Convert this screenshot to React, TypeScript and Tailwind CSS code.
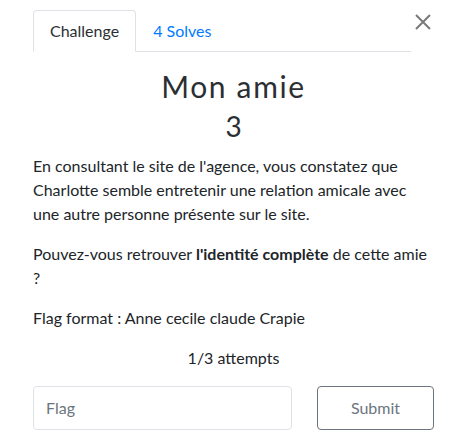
const App = () => {
  return (
    <div className="w-[457px] h-[439px] bg-white text-[#212529] font-['Lato','Liberation_Sans',sans-serif] text-base leading-6 overflow-hidden">
      <div className="flex items-start pt-[10px] pl-[33px]">
        <ul className="flex w-[378px] border-b border-[#dee2e6]">
          <li className="-mb-px px-4 py-2 border border-[#dee2e6] border-b-white rounded-t-[4px] bg-white text-[#2b2f33]">
            Challenge
          </li>
          <li className="-mb-px px-4 py-2 border border-transparent text-[#007bff]">4 Solves</li>
        </ul>
        <button className="ml-[4px] mt-[4px] w-[16px] h-[16px] text-[#7a7a7a]">
          <svg width="16" height="16" viewBox="0 0 16 16" fill="none" stroke="currentColor" strokeWidth="2">
            <path d="M1 1L15 15M15 1L1 15" />
          </svg>
        </button>
      </div>

      <div className="w-[401px] ml-[33px]">
        <h2 className="text-center text-[30px] leading-[1.2] tracking-[0.055em] mt-[16px] text-[#2b2f33]">Mon amie</h2>
        <h3 className="text-center text-[28px] leading-[1.2] mt-[6px] text-[#2b2f33]">3</h3>

        <div className="mt-[10px]">
          <p>
            En consultant le site de l'agence, vous constatez que Charlotte semble entretenir une relation amicale avec
            une autre personne présente sur le site.
          </p>
          <p className="mt-4">
            Pouvez-vous retrouver <strong className="font-bold">l'identité complète</strong> de cette amie ?
          </p>
          <p className="mt-4">Flag format : Anne cecile claude Crapie</p>
        </div>

        <div className="text-center mt-4">1/3 attempts</div>

        <div className="flex mt-[16px] gap-[25px]">
          <input
            className="w-[259px] h-[44px] px-3 border border-[#dee2e6] rounded-[4px] placeholder:text-[#6c757d] outline-none"
            placeholder="Flag"
          />
          <button className="w-[117px] h-[44px] border border-[#6c757d] rounded-[4px] text-[#6c757d]">Submit</button>
        </div>
      </div>
    </div>
  );
};

export default App;
